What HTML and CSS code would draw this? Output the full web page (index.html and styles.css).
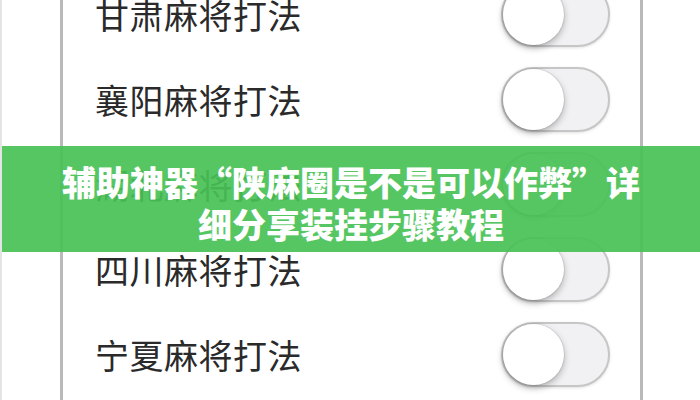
FILE: index.html
```html
<!DOCTYPE html>
<html lang="zh-CN">
<head>
	<meta charset="utf-8">
	<meta name="viewport" content="width=device-width, initial-scale=1">
	<title>麻将打法设置</title>
	<link rel="stylesheet" href="styles.css">
</head>
<body>
<div class="screen">
	<div class="panel">
		<ul class="rules">
			<li class="rule"><span>甘肃麻将打法</span><i class="switch"></i></li>
			<li class="rule"><span>襄阳麻将打法</span><i class="switch"></i></li>
			<li class="rule"><span>湖北麻将打法</span><i class="switch"></i></li>
			<li class="rule"><span>四川麻将打法</span><i class="switch"></i></li>
			<li class="rule"><span>宁夏麻将打法</span><i class="switch"></i></li>
		</ul>
	</div>

	<h1 class="banner">辅助神器“陕麻圈是不是可以作弊”详细分享装挂步骤教程</h1>
</div>
</body>
</html>
```

FILE: styles.css
```css
* {
	box-sizing: border-box;
	margin: 0;
	padding: 0;
}

body {
	font-family: "Noto Sans CJK SC", "Noto Sans", sans-serif;
	background: #fff;
	overflow: hidden;
}

.screen {
	position: relative;
	width: 700px;
	height: 400px;
	overflow: hidden;
	border-left: 2px solid #e4e4e4;
	padding-left: 58px;
}

/* the phone settings page, framed by two grey edges */
.panel {
	display: flow-root;
	width: 583px;
	height: 100%;
	border-left: 3px solid #b9b9b9;
	border-right: 3px solid #b9b9b9;
	background: #fff;
}

.rules {
	list-style: none;
	margin-top: -28px;
}

.rule {
	height: 85px;
	display: flex;
	align-items: center;
	justify-content: space-between;
	padding: 0 30px 0 32px;
	color: #2a2a2a;
	font-size: 34px;
	letter-spacing: 0.5px;
}

/* iOS style switch, off state */
.switch {
	position: relative;
	width: 109px;
	height: 65px;
	border-radius: 33px;
	border: 2px solid #c6c6c6;
	background: #f1f1f3;
	box-shadow: 0 1px 3px rgba(0,0,0,0.12);
}

.switch::before {
	content: '';
	position: absolute;
	left: 0;
	top: 0;
	width: 61px;
	height: 61px;
	border-radius: 50%;
	background: #fff;
	box-shadow: 0 3px 7px rgba(0,0,0,0.28), 0 0 0 1px rgba(0,0,0,0.08);
}

.banner {
	position: absolute;
	left: 0;
	right: 0;
	top: 146px;
	height: 106px;
	padding: 15px 48px 0;
	background: rgba(72,193,86,0.92);
	color: #fff;
	font-size: 34px;
	font-weight: 900;
	line-height: 42px;
	text-align: center;
}
```
